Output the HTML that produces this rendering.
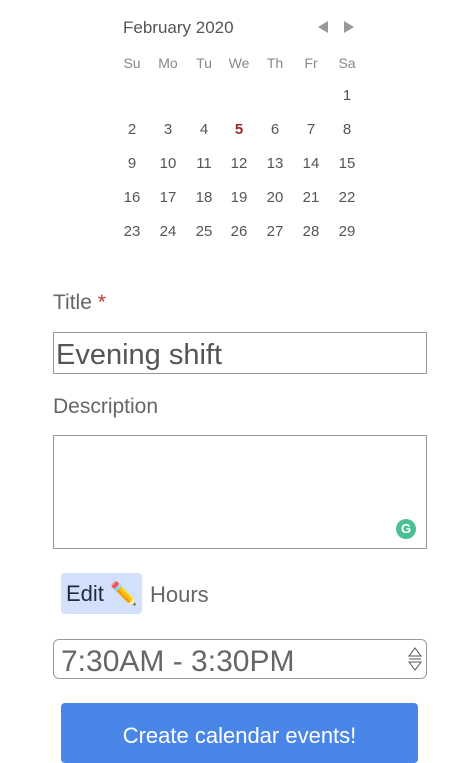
<!DOCTYPE html>
<html><head><meta charset="utf-8"><style>
body{margin:0;width:452px;height:760px;overflow:hidden;background:#fff;font-family:"Liberation Sans",sans-serif;position:relative}
.a{position:absolute;white-space:nowrap}
.c{position:absolute;width:36px;text-align:center;font-size:15px;color:#555;transform:translateX(-18px)}
.h{color:#888;font-size:14px}
</style></head><body>
<div class="a" style="left:123px;top:18px;font-size:17px;color:#555">February 2020</div>
<svg class="a" style="left:317px;top:20px" width="40" height="14"><path d="M1 7L11 1V13Z" fill="#999"/><path d="M27 1L37 7L27 13Z" fill="#999"/></svg>
<div id="cal"></div>
<div class="a" style="left:53px;top:291px;font-size:21px;color:#666">Title <span style="color:#c0392b">*</span></div>
<div class="a" style="left:53px;top:332px;width:372px;height:40px;border:1px solid #999"></div>
<div class="a" style="left:56px;top:339px;font-size:29px;color:#555">Evening shift</div>
<div class="a" style="left:53px;top:395px;font-size:21px;color:#666">Description</div>
<div class="a" style="left:53px;top:435px;width:372px;height:112px;border:1px solid #999"></div>
<div class="a" style="left:396px;top:519px;width:20px;height:20px;border-radius:50%;background:#4cbf95;color:#fff;font-size:13px;font-weight:bold;text-align:center;line-height:20px">G</div>
<div class="a" style="left:61px;top:573px;width:81px;height:41px;border-radius:4px;background:#d3e0fb"></div>
<div class="a" style="left:66px;top:581px;font-size:22px;color:#1f2a44">Edit ✏️</div>
<div class="a" style="left:150px;top:582px;font-size:22px;color:#666">Hours</div>
<div class="a" style="left:53px;top:639px;width:372px;height:38px;border:1px solid #999;border-radius:6px"></div>
<div class="a" style="left:61px;top:645px;font-size:30px;color:#666">7:30AM - 3:30PM</div>
<svg class="a" style="left:407px;top:645px" width="16" height="28"><path d="M2 11L8 3L14 11Z M2 17L8 25L14 17Z" fill="none" stroke="#555"/><path d="M2 14H14" stroke="#555"/></svg>
<div class="a" style="left:61px;top:703px;width:357px;height:60px;border-radius:4px;background:#4a86e8"></div>
<div class="a" style="left:61px;top:723px;width:357px;text-align:center;font-size:22px;color:#fff">Create calendar events!</div>
<script>
var xs=[132,168,204,239,275,311,347],h=["Su","Mo","Tu","We","Th","Fr","Sa"],o="";
h.forEach(function(t,i){o+='<div class="c h" style="left:'+xs[i]+'px;top:55px">'+t+'</div>'});
var ys=[87,121,155,189,223];
for(var d=1;d<=29;d++){var p=d+5,r=Math.floor(p/7),c=p%7;
o+='<div class="c" style="left:'+xs[c]+'px;top:'+ys[r]+'px;'+(d==5?'color:#9b2a2a;font-weight:bold':'')+'">'+d+'</div>'}
document.getElementById('cal').innerHTML=o;
</script>
</body></html>
